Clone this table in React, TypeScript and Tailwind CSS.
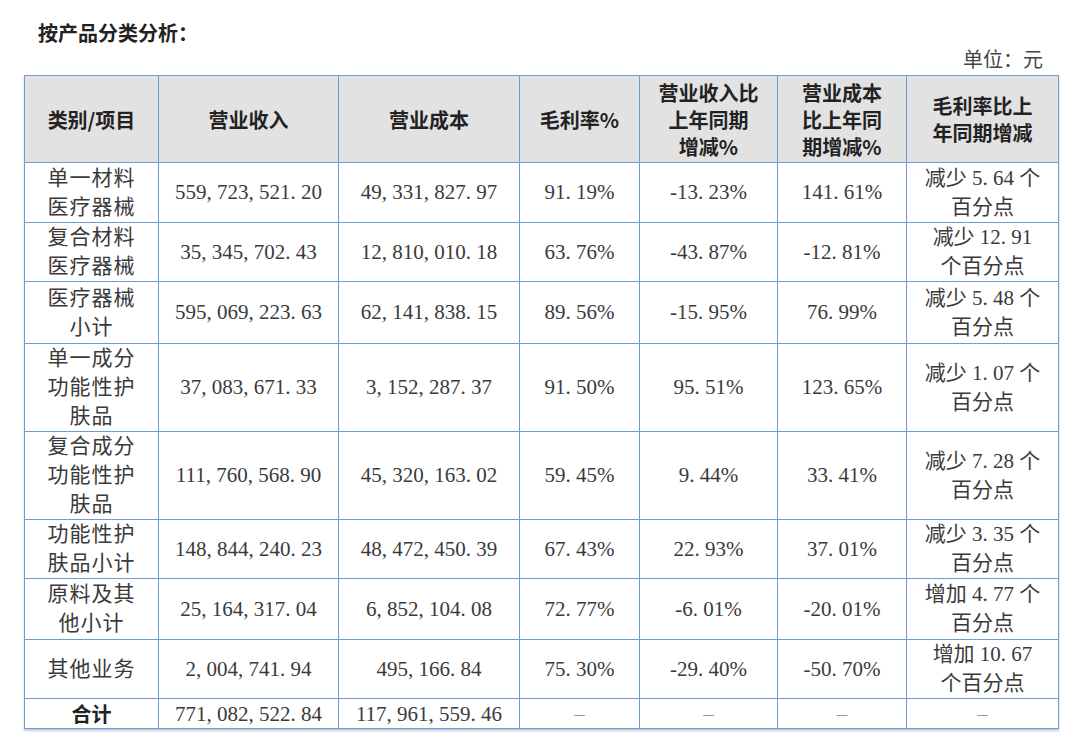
import React from 'react';

type Row = {
  name: string[];
  revenue: string;
  cost: string;
  margin: string;
  revChange: string;
  costChange: string;
  marginChange: string[];
  h: string;
};

const rows: Row[] = [
  { name: ['单一材料', '医疗器械'], revenue: '559, 723, 521. 20', cost: '49, 331, 827. 97', margin: '91. 19%', revChange: '-13. 23%', costChange: '141. 61%', marginChange: ['减少 5. 64 个', '百分点'], h: 'h-[60px]' },
  { name: ['复合材料', '医疗器械'], revenue: '35, 345, 702. 43', cost: '12, 810, 010. 18', margin: '63. 76%', revChange: '-43. 87%', costChange: '-12. 81%', marginChange: ['减少 12. 91', '个百分点'], h: 'h-[58px]' },
  { name: ['医疗器械', '小计'], revenue: '595, 069, 223. 63', cost: '62, 141, 838. 15', margin: '89. 56%', revChange: '-15. 95%', costChange: '76. 99%', marginChange: ['减少 5. 48 个', '百分点'], h: 'h-[62px]' },
  { name: ['单一成分', '功能性护', '肤品'], revenue: '37, 083, 671. 33', cost: '3, 152, 287. 37', margin: '91. 50%', revChange: '95. 51%', costChange: '123. 65%', marginChange: ['减少 1. 07 个', '百分点'], h: 'h-[88px]' },
  { name: ['复合成分', '功能性护', '肤品'], revenue: '111, 760, 568. 90', cost: '45, 320, 163. 02', margin: '59. 45%', revChange: '9. 44%', costChange: '33. 41%', marginChange: ['减少 7. 28 个', '百分点'], h: 'h-[88px]' },
  { name: ['功能性护', '肤品小计'], revenue: '148, 844, 240. 23', cost: '48, 472, 450. 39', margin: '67. 43%', revChange: '22. 93%', costChange: '37. 01%', marginChange: ['减少 3. 35 个', '百分点'], h: 'h-[59px]' },
  { name: ['原料及其', '他小计'], revenue: '25, 164, 317. 04', cost: '6, 852, 104. 08', margin: '72. 77%', revChange: '-6. 01%', costChange: '-20. 01%', marginChange: ['增加 4. 77 个', '百分点'], h: 'h-[61px]' },
  { name: ['其他业务'], revenue: '2, 004, 741. 94', cost: '495, 166. 84', margin: '75. 30%', revChange: '-29. 40%', costChange: '-50. 70%', marginChange: ['增加 10. 67', '个百分点'], h: 'h-[58px]' },
];

const headers: string[][] = [
  ['类别/项目'],
  ['营业收入'],
  ['营业成本'],
  ['毛利率%'],
  ['营业收入比', '上年同期', '增减%'],
  ['营业成本', '比上年同', '期增减%'],
  ['毛利率比上', '年同期增减'],
];

const cell = 'border border-[#7199d2] text-center align-middle p-0';

const Lines = ({ lines }: { lines: string[] }) => (
  <>
    {lines.map((l, i) => (
      <div key={i}>{l}</div>
    ))}
  </>
);

export default function App() {
  return (
    <div className="w-[1080px] h-[749px] bg-white text-[#3a3a3a] font-['Liberation_Serif','Noto_Sans_CJK_SC',serif]">
      <div className="pl-[38px] pt-[20px] h-[46px] leading-[26px] text-[20px] font-bold text-[#222] font-['Noto_Sans_CJK_SC',sans-serif]">
        按产品分类分析：
      </div>
      <div className="h-[29px] leading-[29px] pr-[37px] text-right text-[20px] text-[#444]">单位：元</div>
      <table className="ml-[24px] w-[1034px] table-fixed border-collapse border border-[#7199d2] shadow-[0_2px_2px_rgba(80,110,160,0.35)]">
        <colgroup>
          <col className="w-[134px]" />
          <col className="w-[180px]" />
          <col className="w-[181px]" />
          <col className="w-[120px]" />
          <col className="w-[138px]" />
          <col className="w-[129px]" />
          <col className="w-[152px]" />
        </colgroup>
        <thead>
          <tr className="h-[87px] bg-[#e2e2e2]">
            {headers.map((h, i) => (
              <th
                key={i}
                className={`${cell} font-bold text-[20px] leading-[27px] text-[#222] font-['Noto_Sans_CJK_SC',sans-serif]`}
              >
                <Lines lines={h} />
              </th>
            ))}
          </tr>
        </thead>
        <tbody className="text-[21px] leading-[29px]">
          {rows.map((r, i) => (
            <tr key={i} className={r.h}>
              <td className={`${cell} tracking-[1px]`}>
                <Lines lines={r.name} />
              </td>
              <td className={cell}>{r.revenue}</td>
              <td className={cell}>{r.cost}</td>
              <td className={cell}>{r.margin}</td>
              <td className={cell}>{r.revChange}</td>
              <td className={cell}>{r.costChange}</td>
              <td className={cell}>
                <Lines lines={r.marginChange} />
              </td>
            </tr>
          ))}
          <tr className="h-[30px] leading-[28px]">
            <td className={`${cell} font-bold text-[20px] text-[#222] font-['Noto_Sans_CJK_SC',sans-serif]`}>合计</td>
            <td className={cell}>771, 082, 522. 84</td>
            <td className={cell}>117, 961, 559. 46</td>
            <td className={`${cell} text-[#999]`}>–</td>
            <td className={`${cell} text-[#999]`}>–</td>
            <td className={`${cell} text-[#999]`}>–</td>
            <td className={`${cell} text-[#999]`}>–</td>
          </tr>
        </tbody>
      </table>
    </div>
  );
}
